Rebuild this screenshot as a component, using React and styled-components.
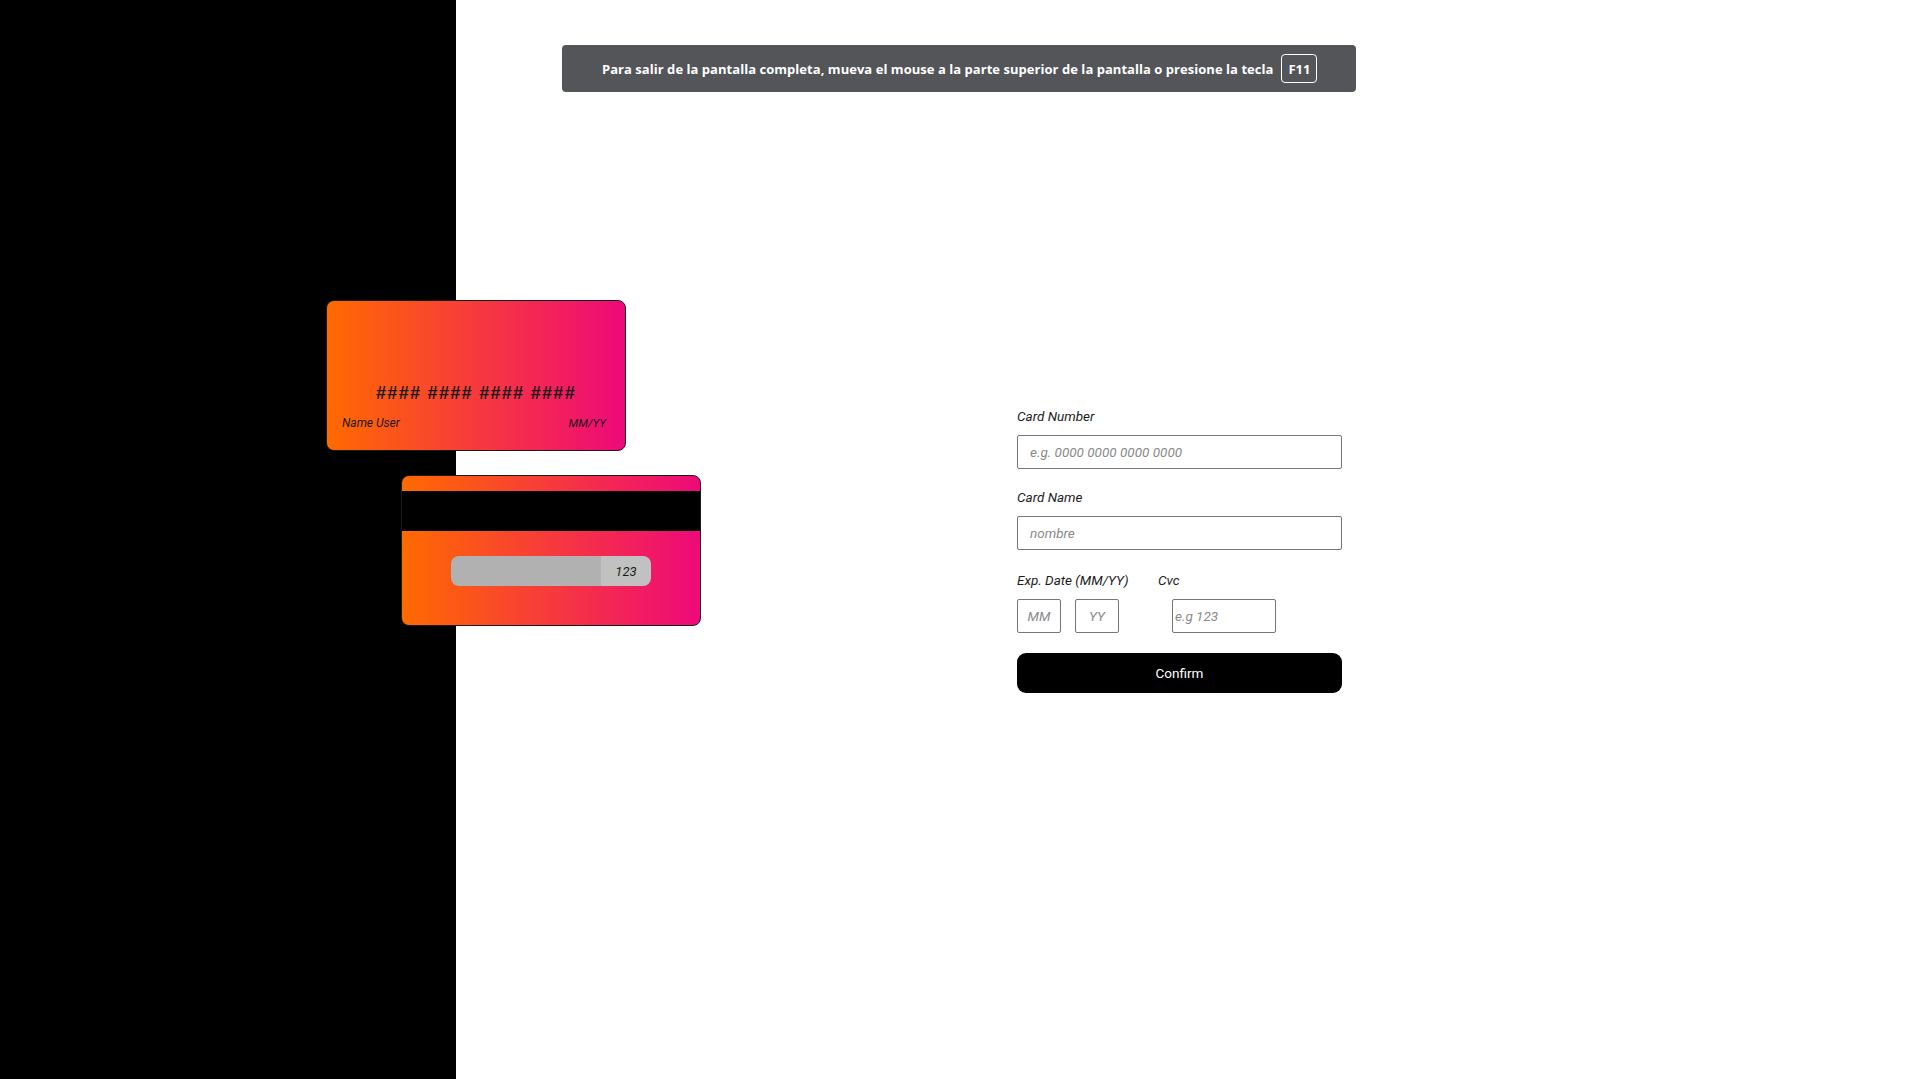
import styled, { createGlobalStyle } from "styled-components";

const GlobalStyle = createGlobalStyle`
  * {
    box-sizing: border-box;
  }

  body {
    margin: 0;
    background: #fff;
    font-family: Roboto, "Liberation Sans", sans-serif;
    color: #1c1c1c;
  }
`;

function App() {
  return (
    <>
      <GlobalStyle />
      <Page>
        <Sidebar>
          <CardStack>
            <FrontCard>
              <CardNumber>#### #### #### ####</CardNumber>
              <CardFooter>
                <span>Name User</span>
                <span>MM/YY</span>
              </CardFooter>
            </FrontCard>

            <BackCard>
              <Stripe />
              <CvcBar>
                <CvcFill />
                <CvcValue>123</CvcValue>
              </CvcBar>
            </BackCard>
          </CardStack>
        </Sidebar>

        <Main>
          <Form onSubmit={(e) => e.preventDefault()}>
            <Field>
              <Label>Card Number</Label>
              <Input placeholder="e.g. 0000 0000 0000 0000" />
            </Field>

            <Field>
              <Label>Card Name</Label>
              <Input placeholder="nombre" />
            </Field>

            <SplitRow>
              <Field>
                <Label>Exp. Date (MM/YY)</Label>
                <DateInputs>
                  <SmallInput placeholder="MM" />
                  <SmallInput placeholder="YY" />
                </DateInputs>
              </Field>
              <Field>
                <Label>Cvc</Label>
                <CvcInput placeholder="e.g 123" />
              </Field>
            </SplitRow>

            <ConfirmButton type="submit">Confirm</ConfirmButton>
          </Form>
        </Main>

        <FullscreenNotice>
          <span>
            Para salir de la pantalla completa, mueva el mouse a la parte superior de la
            pantalla o presione la tecla
          </span>
          <Key>F11</Key>
        </FullscreenNotice>
      </Page>
    </>
  );
}

const Page = styled.div`
  position: relative;
  display: flex;
  min-height: 1079px;
`;

const Sidebar = styled.aside`
  width: 456px;
  flex-shrink: 0;
  background: #000;
  padding-top: 300px;
`;

const CardStack = styled.div`
  margin-left: 326px;
  width: 375px;
  display: flex;
  flex-direction: column;
  align-items: flex-start;
  gap: 24px;
`;

const cardFace = `
  width: 300px;
  height: 151px;
  border: 1px solid #1a1a1a;
  border-radius: 8px;
  background: linear-gradient(to right, #ff6a00, #ee0979);
`;

const FrontCard = styled.div`
  ${cardFace}
  display: flex;
  flex-direction: column;
  justify-content: flex-end;
  padding: 0 19px 20px 15px;
`;

const CardNumber = styled.div`
  font-family: "Liberation Sans", Arial, sans-serif;
  font-weight: 700;
  font-size: 18px;
  letter-spacing: 1.3px;
  line-height: 22px;
  text-align: center;
  color: #1a1a1a;
  margin-bottom: 12px;
  margin-left: 4px;
`;

const CardFooter = styled.div`
  display: flex;
  justify-content: space-between;
  font-style: italic;
  font-size: 12px;
  line-height: 14px;
  color: #1a1a1a;

  span:last-child {
    font-size: 11.5px;
  }
`;

const BackCard = styled.div`
  ${cardFace}
  margin-left: 75px;
  display: flex;
  flex-direction: column;
  overflow: hidden;
`;

const Stripe = styled.div`
  margin-top: 15px;
  height: 40px;
  background: #000;
`;

const CvcBar = styled.div`
  margin: 25px auto 0;
  width: 200px;
  height: 30px;
  border-radius: 8px;
  overflow: hidden;
  display: flex;
`;

const CvcFill = styled.div`
  flex: 1;
  background: #b1b1b1;
`;

const CvcValue = styled.div`
  width: 50px;
  background: #c1c1c1;
  display: flex;
  align-items: center;
  justify-content: center;
  font-style: italic;
  font-size: 13px;
  color: #1a1a1a;
`;

const Main = styled.main`
  flex: 1;
  padding: 408px 0 0 561px;
`;

const Form = styled.form`
  width: 325px;
  display: flex;
  flex-direction: column;
`;

const Field = styled.div`
  display: flex;
  flex-direction: column;
  margin-bottom: 20px;
`;

const Label = styled.label`
  font-style: italic;
  font-weight: 400;
  font-size: 13.5px;
  line-height: 16px;
  color: #1c1c1c;
  margin-bottom: 11px;
`;

const Input = styled.input`
  width: 100%;
  height: 34px;
  border: 1px solid #767676;
  border-radius: 2px;
  padding: 0 12px;
  font-family: Roboto, "Liberation Sans", sans-serif;
  font-style: italic;
  font-size: 13.5px;
  outline: none;

  &::placeholder {
    color: #8a8a8a;
  }
`;

const SplitRow = styled.div`
  display: grid;
  grid-template-columns: 141px 1fr;
  margin-top: 2px;
`;

const DateInputs = styled.div`
  display: flex;
  gap: 14px;
`;

const SmallInput = styled(Input)`
  width: 44px;
  padding: 0;
  text-align: center;
`;

const CvcInput = styled(Input)`
  width: 104px;
  margin-left: 14px;
  padding: 0 2px;
`;

const ConfirmButton = styled.button`
  height: 40px;
  border: none;
  border-radius: 9px;
  background: #000;
  color: #fff;
  font-family: Roboto, "Liberation Sans", sans-serif;
  font-weight: 400;
  font-size: 13.5px;
  cursor: pointer;
`;

const FullscreenNotice = styled.div`
  position: absolute;
  top: 45px;
  left: 562px;
  height: 47px;
  padding: 0 39px 0 40px;
  display: flex;
  align-items: center;
  gap: 8px;
  background: #535559;
  border-radius: 4px;
  color: #fff;
  font-family: "Open Sans", sans-serif;
  font-weight: 700;
  font-size: 13px;
  letter-spacing: 0.04px;
  white-space: nowrap;
`;

const Key = styled.span`
  display: flex;
  align-items: center;
  justify-content: center;
  width: 36px;
  height: 29px;
  border: 1px solid #fff;
  border-radius: 4px;
  font-size: 13px;
`;

export default App;
